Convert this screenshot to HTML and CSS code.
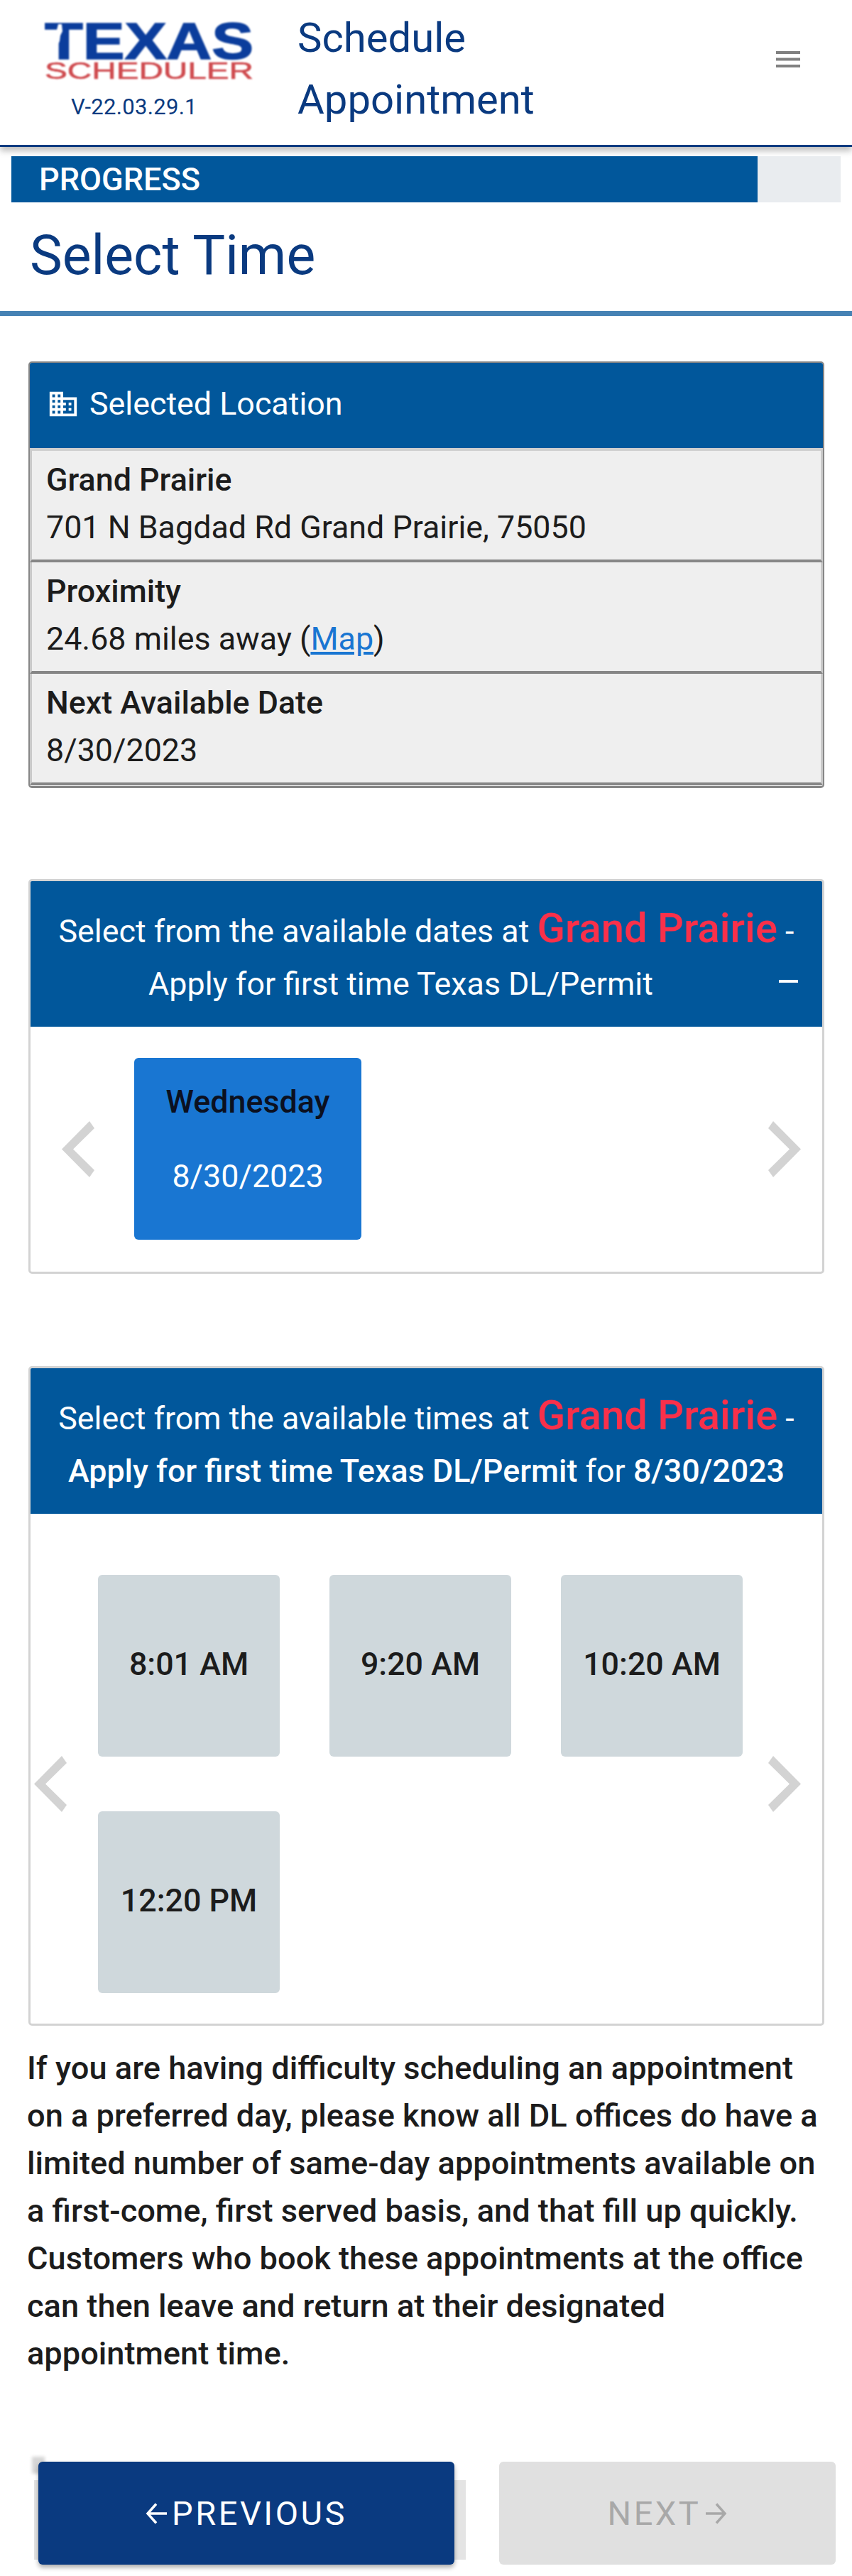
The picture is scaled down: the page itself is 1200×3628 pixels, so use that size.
FILE: index.html
```html
<!DOCTYPE html>
<html lang="en">
<head>
<meta charset="utf-8">
<title>Schedule Appointment</title>
<link rel="stylesheet" href="styles.css">
</head>
<body>
<header class="topbar">
  <div class="brand">
    <svg class="logo" viewBox="0 0 294 82" width="294" height="82" aria-label="Texas Scheduler">
      <text class="logo-top" x="0" y="53" textLength="294" lengthAdjust="spacingAndGlyphs">TEXAS</text>
      <polygon class="logo-star" points="19,4 24,4 25,14 22,20 21,28 18,34 17,24 12,20 16,16"/>
      <text class="logo-bottom" x="0" y="81" textLength="294" lengthAdjust="spacingAndGlyphs">SCHEDULER</text>
    </svg>
    <div class="version">V-22.03.29.1</div>
  </div>
  <h1 class="app-title">Schedule<br>Appointment</h1>
  <button class="menu" aria-label="Menu">
    <svg viewBox="0 0 34 24" width="34" height="24"><path d="M0 0h34v4H0zM0 9.500h34v4H0zM0 19h34v4H0z"/></svg>
  </button>
</header>

<div class="progress"><div class="progress-fill">PROGRESS</div></div>

<h2 class="page-title">Select Time</h2>

<main class="content">
  <section class="location">
    <div class="location-head">
      <svg viewBox="0 0 24 24" width="46" height="46"><path d="M12 7V3H2v18h20V7H12zM6 19H4v-2h2v2zm0-4H4v-2h2v2zm0-4H4V9h2v2zm0-4H4V5h2v2zm4 12H8v-2h2v2zm0-4H8v-2h2v2zm0-4H8V9h2v2zm0-4H8V5h2v2zm10 12h-8v-2h2v-2h-2v-2h2v-2h-2V9h8v10zm-2-8h-2v2h2v-2zm0 4h-2v2h2v-2z"/></svg>
      <span>Selected Location</span>
    </div>
    <div class="loc-row"><strong>Grand Prairie</strong><span>701 N Bagdad Rd Grand Prairie, 75050</span></div>
    <div class="loc-row"><strong>Proximity</strong><span>24.68 miles away (<a href="#">Map</a>)</span></div>
    <div class="loc-row"><strong>Next Available Date</strong><span>8/30/2023</span></div>
  </section>

  <section class="panel panel-dates">
    <div class="panel-head">
      <div>Select from the available dates at <span class="place">Grand Prairie</span> -</div>
      <div class="head-sub">Apply for first time Texas DL/Permit</div>
      <span class="collapse"></span>
    </div>
    <div class="carousel carousel-dates">
      <svg class="chev" viewBox="0 0 46 79" width="46" height="79"><polygon points="39,0 46,10 16,39.500 46,69 39,79 0,39.500"/></svg>
      <div class="date-list">
        <button class="date-tile"><b>Wednesday</b><span>8/30/2023</span></button>
      </div>
      <svg class="chev" viewBox="0 0 46 79" width="46" height="79"><polygon points="7,0 0,10 30,39.500 0,69 7,79 46,39.500"/></svg>
    </div>
  </section>

  <section class="panel panel-times">
    <div class="panel-head">
      <div>Select from the available times at <span class="place">Grand Prairie</span> -</div>
      <div><b>Apply for first time Texas DL/Permit</b> for <b>8/30/2023</b></div>
    </div>
    <div class="carousel carousel-times">
      <svg class="chev" viewBox="0 0 46 79" width="46" height="79"><polygon points="39,0 46,10 16,39.500 46,69 39,79 0,39.500"/></svg>
      <div class="time-list">
        <button class="time-tile">8:01 AM</button>
        <button class="time-tile">9:20 AM</button>
        <button class="time-tile">10:20 AM</button>
        <button class="time-tile">12:20 PM</button>
      </div>
      <svg class="chev" viewBox="0 0 46 79" width="46" height="79"><polygon points="7,0 0,10 30,39.500 0,69 7,79 46,39.500"/></svg>
    </div>
  </section>

  <p class="notice">If you are having difficulty scheduling an appointment on a preferred day, please know all DL offices do have a limited number of same-day appointments available on a first-come, first served basis, and that fill up quickly. Customers who book these appointments at the office can then leave and return at their designated appointment time.</p>
</main>

<footer class="actions">
  <button class="btn btn-prev">
    <svg viewBox="0 0 30 30" width="30" height="30"><path d="M30 15H3M15 1.500 3 15l12 13.500"/></svg>
    <span>PREVIOUS</span>
  </button>
  <button class="btn btn-next" disabled>
    <span>NEXT</span>
    <svg viewBox="0 0 30 30" width="30" height="30"><path d="M0 15h27M15 1.500 27 15 15 28.500"/></svg>
  </button>
</footer>
</body>
</html>
```

FILE: styles.css
```css
* { box-sizing: border-box; }

html, body { margin: 0; padding: 0; }

body {
  width: 1200px;
  height: 3628px;
  overflow: hidden;
  background: #fff;
  color: #1c1c1c;
  font-family: Roboto, "Liberation Sans", sans-serif;
  font-size: 44.800px;
}

button { font-family: inherit; border: 0; padding: 0; }

/* Top bar */
.topbar {
  display: flex;
  height: 207px;
  border-bottom: 3px solid #0a3a80;
  box-shadow: 0 5px 9px rgba(0, 0, 0, .28);
}

.brand { width: 419px; padding: 30px 0 0 63px; }
.logo { display: block; overflow: visible; filter: blur(.8px); }
.logo-top { font: 700 73px "Liberation Sans", sans-serif; fill: #0b3d9c; stroke: #0b3d9c; stroke-width: 1.500px; }
.logo-bottom { font: 400 34px "Liberation Sans", sans-serif; fill: #cf4a4e; stroke: #cf4a4e; stroke-width: .6px; }
.logo-star { fill: #fff; }
.version { margin: 19px 0 0 37px; font-size: 31px; line-height: 40px; letter-spacing: .3px; color: #0a3a80; }

.app-title {
  margin: 0;
  padding-top: 10px;
  font-size: 58px;
  font-weight: 400;
  line-height: 87px;
  color: #0a3a80;
}

.menu { margin: 72px 73px 0 auto; width: 34px; height: 24px; background: none; }
.menu svg { display: block; fill: #808080; }

/* Progress */
.progress { margin: 13px 16px 0; height: 65px; background: #e9ecef; position: relative; }
.progress-fill {
  width: 1051px;
  height: 65px;
  padding-left: 39px;
  background: #01579b;
  color: #fff;
  font-size: 45px;
  font-weight: 500;
  line-height: 65px;
}

.page-title {
  margin: 0;
  padding: 20px 42px;
  height: 160px;
  border-bottom: 7px solid #4682b4;
  font-size: 77px;
  font-weight: 400;
  line-height: 111px;
  color: #0a3a80;
}

/* Content */
.content { padding: 64px 39px 0 40px; }

.location {
  height: 601px;
  border: 2px solid #868686;
  border-bottom-width: 3px;
  border-radius: 5px;
  background: #efefef;
  overflow: hidden;
}

.location-head {
  display: flex;
  align-items: center;
  gap: 14px;
  height: 120px;
  padding: 0 0 4px 24px;
  background: #01579b;
  color: #fff;
  line-height: 60px;
}
.location-head svg { fill: #fff; flex: none; }

.loc-row {
  display: flex;
  flex-direction: column;
  height: 157px;
  padding: 7px 0 0 20px;
  border: 3px solid #c9c9c9;
  border-width: 0 3px 4px;
  border-bottom-color: #868686;
  line-height: 67px;
}
.loc-row strong { font-weight: 500; }
.loc-row a { color: #1976d2; }
.location-head + .loc-row { border-top: 4px solid #cfcfcf; height: 161px; }

.panel {
  position: relative;
  border: 3px solid #d3d3d3;
  border-radius: 5px;
  background: #fff;
  overflow: hidden;
}
.panel-dates { margin-top: 128px; height: 556px; }
.panel-times { margin-top: 130px; height: 929px; }

.panel-head {
  position: relative;
  padding: 29px 0 28px;
  height: 205px;
  background: #01579b;
  color: #fff;
  text-align: center;
  line-height: 74px;
}
.panel-head b { font-weight: 500; }
.place { color: #f9304a; font-size: 58px; font-weight: 500; }
.head-sub { padding-right: 72px; }
.collapse { position: absolute; right: 34px; top: 139px; width: 27px; height: 4px; background: #fff; }

.carousel { display: flex; align-items: center; }
.chev { flex: none; fill: #d3d3d3; }

.carousel-dates { padding: 44px 30px 44px 44px; }
.date-list { flex: 1; padding-left: 56px; }
.date-tile {
  display: flex;
  flex-direction: column;
  align-items: center;
  width: 320px;
  height: 256px;
  padding-top: 9px;
  border-radius: 6px;
  background: #1976d2;
  color: #fff;
  font-size: 44.800px;
  line-height: 105px;
}
.date-tile b { font-weight: 500; color: #0b1020; }

.carousel-times { padding: 86px 30px 44px 5px; }
.time-list {
  flex: 1;
  display: grid;
  grid-template-columns: repeat(3, 256px);
  grid-auto-rows: 256px;
  column-gap: 70px;
  row-gap: 77px;
  padding-left: 44px;
}
.time-tile {
  padding-bottom: 5px;
  border-radius: 6px;
  background: #cfd8dc;
  color: #1c1c1c;
  font-size: 44.800px;
  font-weight: 500;
}

.notice {
  margin: 26px 0 0 -2px;
  width: 1132px;
  font-size: 45.200px;
  font-weight: 500;
  line-height: 67px;
  color: #1c1c1c;
}

/* Footer actions */
.actions { display: flex; margin-top: 119px; padding-left: 54px; gap: 63px; }

.btn {
  display: flex;
  align-items: center;
  justify-content: center;
  gap: 7px;
  height: 145px;
  border-radius: 6px;
  font-size: 47px;
  letter-spacing: 3.500px;
}
.btn svg { fill: none; stroke: currentColor; stroke-width: 3.500; flex: none; }

.btn-prev {
  position: relative;
  width: 586px;
  background: #0a3a80;
  color: #fff;
  box-shadow: 0 4px 6px rgba(0, 0, 0, .32);
}
.btn-prev::before {
  content: "";
  position: absolute;
  z-index: -1;
  left: -6px;
  right: -16px;
  top: 26px;
  bottom: 7px;
  background: #e4e4e4;
}
.btn-prev::after {
  content: "";
  position: absolute;
  z-index: -1;
  left: -9px;
  top: -7px;
  width: 18px;
  height: 24px;
  background: #d6d6d6;
  filter: blur(2px);
}

.btn-next { width: 474px; background: #e0e0e0; color: #a8a8a8; }
```
